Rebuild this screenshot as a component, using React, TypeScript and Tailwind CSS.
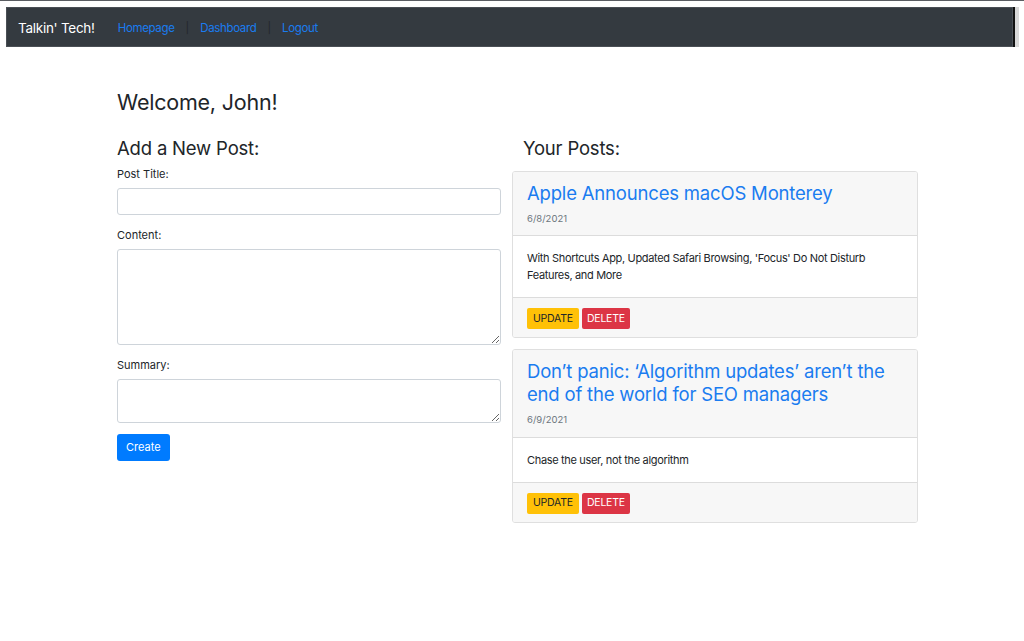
import React from 'react';

type Post = { id: number; title: string; date: string; summary: string };

const posts: Post[] = [
  {
    id: 1,
    title: 'Apple Announces macOS Monterey',
    date: '6/8/2021',
    summary: "With Shortcuts App, Updated Safari Browsing, 'Focus' Do Not Disturb Features, and More",
  },
  {
    id: 2,
    title: 'Don’t panic: ‘Algorithm updates’ aren’t the end of the world for SEO managers',
    date: '6/9/2021',
    summary: 'Chase the user, not the algorithm',
  },
];

const Navbar: React.FC = () => (
  <div className="border-t border-[#5a5d62] bg-white pt-[6px] pl-[6px] pr-[5px] flex">
    <nav className="flex-1 h-[40px] bg-[#343a40] border border-[#4a4f55] flex items-center pl-[11px] pt-[3px]">
      <span className="text-white text-[13.5px] tracking-[-0.02em] mr-[23px]">Talkin' Tech!</span>
      <a className="text-[#1a7cf0] text-[11.5px] tracking-[-0.03em]">Homepage</a>
      <span className="text-[#23272b] text-[11px] mx-[11px]">|</span>
      <a className="text-[#1a7cf0] text-[11.5px] tracking-[-0.03em]">Dashboard</a>
      <span className="text-[#23272b] text-[11px] mx-[11px]">|</span>
      <a className="text-[#1a7cf0] text-[11.5px] tracking-[-0.03em]">Logout</a>
    </nav>
    <div className="w-[2px] h-[40px] bg-[#111]" />
    <div className="w-[4px] h-[40px] bg-[#d8d8d8]" />
  </div>
);

const PostCard: React.FC<{ post: Post }> = ({ post }) => (
  <div className="border border-[#dfdfdf] rounded-[3px] overflow-hidden mb-[11px]">
    <div className="bg-[#f7f7f7] px-[14px] pt-[10px] pb-[9px] border-b border-[#dcdcdc]">
      <h3 className="text-[#1a7cf0] text-[18.5px] leading-[23px] tracking-[-0.01em]">{post.title}</h3>
      <p className="text-[#6c757d] text-[9.5px] mt-[7px]">{post.date}</p>
    </div>
    <div className="bg-white px-[14px] pt-[14px] pb-[13px] text-[11px] leading-[17px] tracking-[-0.03em] text-[#212529]">
      {post.summary}
    </div>
    <div className="bg-[#f7f7f7] border-t border-[#dcdcdc] px-[14px] pt-[10px] pb-[8px] flex gap-[3px]">
      <button className="bg-[#ffc107] text-[#212529] text-[10.5px] tracking-[-0.02em] h-[21px] px-[6px] rounded-[2px]">UPDATE</button>
      <button className="bg-[#dc3545] text-white text-[10.5px] tracking-[-0.02em] h-[21px] px-[5px] rounded-[2px]">DELETE</button>
    </div>
  </div>
);

const App: React.FC = () => {
  return (
    <div className="min-h-[641px] bg-white text-[#212529] font-['Inter',sans-serif]">
      <Navbar />
      <div className="pl-[117px] pt-[42px]">
        <h1 className="text-[21.5px] leading-[26px] tracking-[-0.01em]">Welcome, John!</h1>
        <div className="flex mt-[21px]">
          <div className="w-[384px]">
            <h2 className="text-[18.5px] leading-[24px] tracking-[-0.01em]">Add a New Post:</h2>
            <label className="block text-[11px] leading-[16px] mt-[6px]">Post Title:</label>
            <input className="block w-full h-[27px] mt-[6px] border border-[#ced4da] rounded-[3px] bg-white" />
            <label className="block text-[11px] leading-[16px] mt-[12px]">Content:</label>
            <textarea className="block w-full h-[96px] mt-[6px] border border-[#ced4da] rounded-[3px] bg-white" />
            <label className="block text-[11px] leading-[16px] mt-[12px]">Summary:</label>
            <textarea className="block w-full h-[44px] mt-[6px] border border-[#ced4da] rounded-[3px] bg-white" />
            <button className="mt-[11px] bg-[#007bff] text-white text-[11px] h-[27px] px-[9px] rounded-[3px]">Create</button>
          </div>
          <div className="w-[406px] ml-[11px]">
            <h2 className="text-[18.5px] leading-[24px] tracking-[-0.01em] pl-[11px] mb-[11px]">Your Posts:</h2>
            {posts.map((p) => (
              <PostCard key={p.id} post={p} />
            ))}
          </div>
        </div>
      </div>
    </div>
  );
};

export default App;
